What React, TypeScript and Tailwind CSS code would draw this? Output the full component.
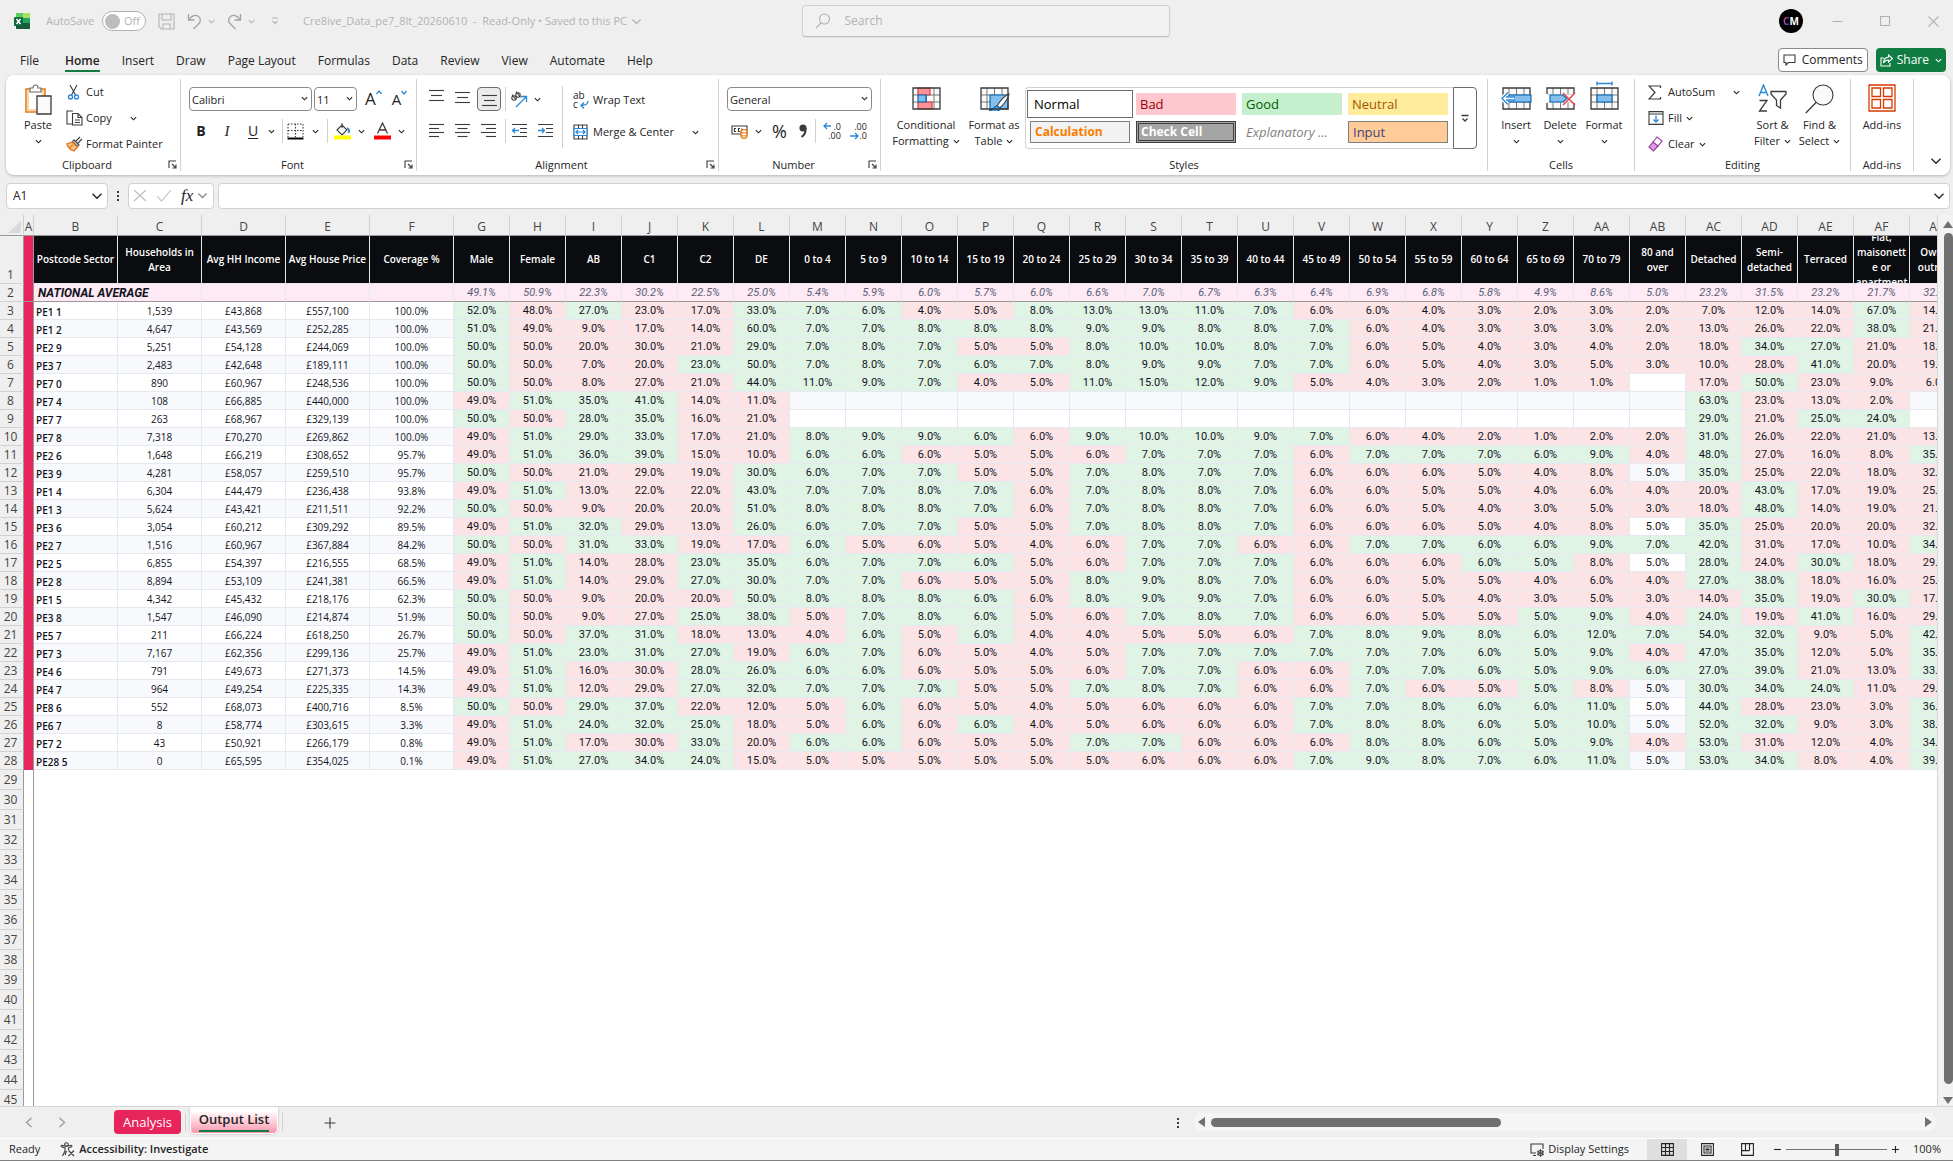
import React, { useState } from 'react';
import { clsx } from 'clsx';

const GROUP_SEPARATOR = 'border-r border-[#d1d1d1]';

const TABS = ['File', 'Home', 'Insert', 'Draw', 'Page Layout', 'Formulas', 'Data', 'Review', 'View', 'Automate', 'Help'];

const COLUMNS = [
  { letter: 'B', title: 'Postcode Sector' },
  { letter: 'C', title: 'Households in\nArea' },
  { letter: 'D', title: 'Avg HH Income' },
  { letter: 'E', title: 'Avg House Price' },
  { letter: 'F', title: 'Coverage %' },
];

// avg is printed in row 2, limit is the unrounded value used for the red/green rule
const METRICS = [
  { letter: 'G', title: 'Male', avg: '49.1%', limit: 49.1 },
  { letter: 'H', title: 'Female', avg: '50.9%', limit: 50.9 },
  { letter: 'I', title: 'AB', avg: '22.3%', limit: 22.3 },
  { letter: 'J', title: 'C1', avg: '30.2%', limit: 30.2 },
  { letter: 'K', title: 'C2', avg: '22.5%', limit: 22.5 },
  { letter: 'L', title: 'DE', avg: '25.0%', limit: 25 },
  { letter: 'M', title: '0 to 4', avg: '5.4%', limit: 5.4 },
  { letter: 'N', title: '5 to 9', avg: '5.9%', limit: 5.9 },
  { letter: 'O', title: '10 to 14', avg: '6.0%', limit: 6.01 },
  { letter: 'P', title: '15 to 19', avg: '5.7%', limit: 5.7 },
  { letter: 'Q', title: '20 to 24', avg: '6.0%', limit: 6.01 },
  { letter: 'R', title: '25 to 29', avg: '6.6%', limit: 6.6 },
  { letter: 'S', title: '30 to 34', avg: '7.0%', limit: 6.99 },
  { letter: 'T', title: '35 to 39', avg: '6.7%', limit: 6.7 },
  { letter: 'U', title: '40 to 44', avg: '6.3%', limit: 6.3 },
  { letter: 'V', title: '45 to 49', avg: '6.4%', limit: 6.4 },
  { letter: 'W', title: '50 to 54', avg: '6.9%', limit: 6.9 },
  { letter: 'X', title: '55 to 59', avg: '6.8%', limit: 6.8 },
  { letter: 'Y', title: '60 to 64', avg: '5.8%', limit: 5.8 },
  { letter: 'Z', title: '65 to 69', avg: '4.9%', limit: 4.9 },
  { letter: 'AA', title: '70 to 79', avg: '8.6%', limit: 8.6 },
  { letter: 'AB', title: '80 and\nover', avg: '5.0%', limit: 5 },
  { letter: 'AC', title: 'Detached', avg: '23.2%', limit: 23.2 },
  { letter: 'AD', title: 'Semi-\ndetached', avg: '31.5%', limit: 31.5 },
  { letter: 'AE', title: 'Terraced', avg: '23.2%', limit: 23.2 },
  { letter: 'AF', title: 'Flat,\nmaisonett\ne or\napartment', avg: '21.7%', limit: 21.7 },
  { letter: 'AG', title: 'Owned\noutright', avg: '32.5%', limit: 32.5 },
];

// sector | households | income | house price | coverage | percentages G..AG ("_" is an empty cell)
const ROWS = [
  'PE1 1|1,539|£43,868|£557,100|100.0%|52 48 27 23 17 33 7 6 4 5 8 13 13 11 7 6 6 4 3 2 3 2 7 12 14 67 14',
  'PE1 2|4,647|£43,569|£252,285|100.0%|51 49 9 17 14 60 7 7 8 8 8 9 9 8 8 7 6 4 3 3 3 2 13 26 22 38 21',
  'PE2 9|5,251|£54,128|£244,069|100.0%|50 50 20 30 21 29 7 8 7 5 5 8 10 10 8 7 6 5 4 3 4 2 18 34 27 21 18',
  'PE3 7|2,483|£42,648|£189,111|100.0%|50 50 7 20 23 50 7 8 7 6 7 8 9 9 7 7 6 5 4 3 5 3 10 28 41 20 19',
  'PE7 0|890|£60,967|£248,536|100.0%|50 50 8 27 21 44 11 9 7 4 5 11 15 12 9 5 4 3 2 1 1 _ 17 50 23 9 6',
  'PE7 4|108|£66,885|£440,000|100.0%|49 51 35 41 14 11 _ _ _ _ _ _ _ _ _ _ _ _ _ _ _ _ 63 23 13 2 _',
  'PE7 7|263|£68,967|£329,139|100.0%|50 50 28 35 16 21 _ _ _ _ _ _ _ _ _ _ _ _ _ _ _ _ 29 21 25 24 _',
  'PE7 8|7,318|£70,270|£269,862|100.0%|49 51 29 33 17 21 8 9 9 6 6 9 10 10 9 7 6 4 2 1 2 2 31 26 22 21 13',
  'PE2 6|1,648|£66,219|£308,652|95.7%|49 51 36 39 15 10 6 6 6 5 5 6 7 7 7 6 7 7 7 6 9 4 48 27 16 8 35',
  'PE3 9|4,281|£58,057|£259,510|95.7%|50 50 21 29 19 30 6 7 7 5 5 7 8 7 7 6 6 6 5 4 8 5 35 25 22 18 32',
  'PE1 4|6,304|£44,479|£236,438|93.8%|49 51 13 22 22 43 7 7 8 7 6 7 8 8 7 6 6 5 5 4 6 4 20 43 17 19 25',
  'PE1 3|5,624|£43,421|£211,511|92.2%|50 50 9 20 20 51 8 8 8 7 6 7 8 8 7 6 6 5 4 3 5 3 18 48 14 19 21',
  'PE3 6|3,054|£60,212|£309,292|89.5%|49 51 32 29 13 26 6 7 7 5 5 7 8 8 7 6 6 6 5 4 8 5 35 25 20 20 32',
  'PE2 7|1,516|£60,967|£367,884|84.2%|50 50 31 33 19 17 6 5 6 5 4 6 7 7 6 6 7 7 6 6 9 7 42 31 17 10 34',
  'PE2 5|6,855|£54,397|£216,555|68.5%|49 51 14 28 23 35 6 7 7 6 5 6 7 7 7 6 6 6 6 5 8 5 28 24 30 18 29',
  'PE2 8|8,894|£53,109|£241,381|66.5%|49 51 14 29 27 30 7 7 6 5 5 8 9 8 7 6 6 5 5 4 6 4 27 38 18 16 25',
  'PE1 5|4,342|£45,432|£218,176|62.3%|50 50 9 20 20 50 8 8 8 6 6 8 9 9 7 6 6 5 4 3 5 3 14 35 19 30 17',
  'PE3 8|1,547|£46,090|£214,874|51.9%|50 50 9 27 25 38 5 7 8 6 5 6 7 8 7 6 6 5 5 5 9 4 24 19 41 16 29',
  'PE5 7|211|£66,224|£618,250|26.7%|50 50 37 31 18 13 4 6 5 6 4 4 5 5 6 7 8 9 8 6 12 7 54 32 9 5 42',
  'PE7 3|7,167|£62,356|£299,136|25.7%|49 51 23 31 27 19 6 7 6 5 4 5 7 7 7 7 7 7 6 5 9 4 47 35 12 5 35',
  'PE4 6|791|£49,673|£271,373|14.5%|49 51 16 30 28 26 6 6 6 5 5 6 7 7 6 6 7 7 6 5 9 6 27 39 21 13 33',
  'PE4 7|964|£49,254|£225,335|14.3%|49 51 12 29 27 32 7 7 7 5 5 7 8 7 6 6 7 6 5 5 8 5 30 34 24 11 29',
  'PE8 6|552|£68,073|£400,716|8.5%|50 50 29 37 22 12 5 6 6 5 4 5 6 6 6 7 7 8 6 6 11 5 44 28 23 3 36',
  'PE6 7|8|£58,774|£303,615|3.3%|49 51 24 32 25 18 5 6 6 6 4 5 6 6 6 7 8 8 6 5 10 5 52 32 9 3 38',
  'PE7 2|43|£50,921|£266,179|0.8%|49 51 17 30 33 20 6 6 6 5 5 7 7 6 6 6 8 8 6 5 9 4 53 31 12 4 34',
  'PE28 5|0|£65,595|£354,025|0.1%|49 51 27 34 24 15 5 5 5 5 5 5 6 6 6 7 9 8 7 6 11 5 53 34 8 4 39',
];

const EMPTY_ROWS = Array.from({ length: 17 }, (_, i) => i + 29);

function Chevron({ size = 7, className = '' }: { size?: number; className?: string }) {
  return (
    <svg width={size} height={size} viewBox="0 0 8 8" fill="none" stroke="currentColor" strokeWidth={size > 8 ? 0.9 : 1.3} className={clsx('shrink-0', className)}>
      <path d="M1 2.5 4 5.5 7 2.5" />
    </svg>
  );
}

function Svg({ w, h, children, className = '' }: { w: number; h: number; children: React.ReactNode; className?: string }) {
  return (
    <svg width={w} height={h} viewBox={`0 0 ${w} ${h}`} fill="none" stroke="#3b3b3b" strokeWidth="1.1" className={clsx('shrink-0', className)}>
      {children}
    </svg>
  );
}

function TitleBar() {
  const [autoSave, setAutoSave] = useState(false);

  return (
    <header className="grid h-[42px] grid-cols-[1fr_368px_1fr] items-center pl-[18px] text-[11px] text-[#b3b3b3]">
      <div className="-ml-1 flex items-center">
        <Svg w={16} h={18}>
          <rect x="2" y="1" width="14" height="16" rx="1.5" fill="#21a366" stroke="none" />
          <rect x="2" y="1" width="7" height="5" fill="#57d163" stroke="none" />
          <rect x="9" y="1" width="7" height="5" fill="#a8e063" stroke="none" />
          <rect x="2" y="11" width="14" height="6" rx="1" fill="#185c37" stroke="none" />
          <rect x="0" y="5" width="9" height="9" rx="1" fill="#0f6b3a" stroke="none" />
          <path d="m2.500 7 4 5M6.500 7l-4 5" stroke="#fff" strokeWidth="1.500" />
        </Svg>
        <label className="ml-4 flex items-center gap-2">
          AutoSave
          <input type="checkbox" role="switch" className="sr-only" checked={autoSave} onChange={(e) => setAutoSave(e.target.checked)} />
          <span className="flex h-5 w-11 items-center gap-1 rounded-full border border-[#b3b3b3] bg-white px-0.5">
            <span className="h-[15px] w-[15px] rounded-full bg-[#bdbdbd]" />
            {autoSave ? 'On' : 'Off'}
          </span>
        </label>
        <button aria-label="Save" className="ml-3">
          <Svg w={17} h={17}>
            <path d="M1 1h15v15H3.500L1 13.500zM4 1v6h9V1M5 16v-5h7v5" stroke="#b3b3b3" />
          </Svg>
        </button>
        <button aria-label="Undo" className="ml-3 flex items-center gap-1.5">
          <Svg w={15} h={17}>
            <path d="M1.500 1v6h6M1.500 7C5 2 9 1.500 11.500 3.500 14.500 6 13.500 9 11.500 11L6.500 16" stroke="#a3a3a3" strokeWidth="1.300" />
          </Svg>
          <Chevron />
        </button>
        <button aria-label="Redo" className="ml-3 flex items-center gap-1.5">
          <Svg w={15} h={17}>
            <path d="M13.500 1v6h-6M13.500 7C10 2 6 1.500 3.500 3.500.5 6 1.500 9 3.500 11l5 5" stroke="#a3a3a3" strokeWidth="1.300" />
          </Svg>
          <Chevron />
        </button>
        <button aria-label="Customize Quick Access Toolbar" className="ml-4">
          <Svg w={8} h={10}>
            <path d="M1 2h6M1.500 5 4 7.500 6.500 5" stroke="#b3b3b3" />
          </Svg>
        </button>
        <button className="ml-6 flex items-center gap-1 whitespace-nowrap">
          <span className="whitespace-pre">Cre8ive_Data_pe7_8lt_20260610  -  Read-Only • Saved to this PC</span>
          <Chevron size={11} />
        </button>
      </div>

      <label className="flex h-8 items-center gap-3.5 rounded-[4px] border border-[#d0d0d0] border-b-[#bdbdbd] bg-[#f1f1f1] px-3 shadow-xs">
        <Svg w={16} h={16}>
          <circle cx="9.500" cy="6" r="5" stroke="#b3b3b3" />
          <path d="m6 10-5 5" stroke="#b3b3b3" />
        </Svg>
        <input type="text" aria-label="Search" placeholder="Search" className="w-full bg-transparent text-[12px] outline-none placeholder:text-[#b3b3b3]" />
      </label>

      <div className="flex items-center justify-end gap-[37px] pr-3.5">
        <span className="-mr-2 flex h-6 w-6 items-center justify-center rounded-full bg-black text-[10px] font-bold text-white">
          <span className="bg-linear-to-b from-[#e8245c] to-[#5a2ff0] bg-clip-text text-transparent">C</span>M
        </span>
        <button aria-label="Minimize">
          <Svg w={11} h={11}><path d="M.5 5.500h10" stroke="#b3b3b3" /></Svg>
        </button>
        <button aria-label="Maximize">
          <Svg w={11} h={11}><rect x=".5" y=".5" width="9" height="9" stroke="#b3b3b3" /></Svg>
        </button>
        <button aria-label="Close">
          <Svg w={11} h={11}><path d="m.5.5 10 10M10.500.5l-10 10" stroke="#b3b3b3" /></Svg>
        </button>
      </div>
    </header>
  );
}

function TabBar() {
  return (
    <div className="flex h-[33px] items-end justify-between pr-[7px] pb-[3px] text-[12px]">
      <nav className="flex items-end gap-[22px] pl-5">
        {TABS.map((tab) => (
          <button
            key={tab}
            className={clsx('h-6 border-b-2 pt-1', tab === 'Home' ? 'ml-1 border-[#107c41] font-semibold' : 'border-transparent')}
          >
            {tab}
          </button>
        ))}
      </nav>
      <div className="flex gap-2">
        <button className="flex h-6 items-center gap-1.5 rounded-[4px] border border-[#8a8a8a] bg-white px-1">
          <Svg w={13} h={12}><path d="M1 1h11v7.500H5.500L3 11V8.500H1z" /></Svg>
          Comments
        </button>
        <button className="flex h-6 items-center gap-1 rounded-[4px] bg-[#107c41] px-1 text-white">
          <Svg w={13} h={13}>
            <path d="M4 4H1v8h9V9M8.500 1l4 3.500-4 3.500V6C6 6 4.500 7 3.500 9c0-3 2-5.500 5-6z" stroke="#fff" />
          </Svg>
          Share
          <Chevron className="ml-0.5" />
        </button>
      </div>
    </div>
  );
}

function Group({ label, launcher, className, children }: { label: string; launcher?: boolean; className: string; children: React.ReactNode }) {
  return (
    <section aria-label={label} className={clsx('my-1 flex flex-col', GROUP_SEPARATOR, className)}>
      <div className="flex h-[79px]">{children}</div>
      <div className="flex h-[13px] items-center">
        <span className="flex-1 text-center leading-none">{label}</span>
        {launcher && (
          <button aria-label={`${label} settings`} className="pr-[3px]">
            <Svg w={9} h={9}><path d="M1 8V1h7M4 4l4 4M8 4.500V8H4.500" /></Svg>
          </button>
        )}
      </div>
    </section>
  );
}

function BigButton({ icon, lines, chevron, className }: { icon: React.ReactNode; lines: string[]; chevron?: boolean; className: string }) {
  return (
    <button className={clsx('flex shrink-0 flex-col items-center justify-start leading-4', className)}>
      <span className="flex h-[38px] items-start">{icon}</span>
      <span>{lines[0]}</span>
      <span className="flex h-4 items-center gap-1">
        {lines[1]}
        {chevron && <Chevron />}
      </span>
    </button>
  );
}

function SmallButton({ icon, label, chevron, wide }: { icon: React.ReactNode; label: string; chevron?: boolean; wide?: boolean }) {
  return (
    <button className="flex h-[26px] items-center whitespace-nowrap">
      <span className="flex w-5 justify-start">{icon}</span>
      {label}
      {chevron && <Chevron className={wide ? 'ml-[18px]' : 'ml-1'} />}
    </button>
  );
}

function Combo({ label, value, className }: { label: string; value: string; className: string }) {
  return (
    <div className={clsx('relative', className)}>
      <select aria-label={label} defaultValue={value} className="h-6 w-full appearance-none rounded-[4px] border border-[#8a8a8a] bg-white pl-0.5 leading-none">
        <option>{value}</option>
      </select>
      <Chevron className="pointer-events-none absolute top-2 right-1" />
    </div>
  );
}

function Lines({ rows, align = 'center' }: { rows: number[]; align?: 'left' | 'center' | 'right' }) {
  return (
    <Svg w={15} h={16}>
      {rows.map((len, i) => {
        const x = align === 'left' ? 0 : align === 'right' ? 15 - len : (15 - len) / 2;
        const y = 1.5 + i * (rows.length > 3 ? 4 : 5);
        return <path key={i} d={`M${x} ${y}h${len}`} />;
      })}
    </Svg>
  );
}

function GridIcon({ kind }: { kind: 'conditional' | 'table' | 'insert' | 'delete' | 'format' }) {
  return (
    <Svg w={31} h={32}>
      {kind === 'format' && <path d="M8 4.500h15M8 2.500v4M23 2.500v4" stroke="#2b88d8" strokeWidth="1.400" />}
      <g transform="translate(1 8)">
        <path d="M1 1h27v21H1z" fill="#fafafa" stroke="none" />
        <path d="M1 8h27M1 15h27M7 1v21M14.500 1v21M22 1v21" strokeWidth=".9" stroke="#6b6b6b" />
        {kind === 'conditional' && (
          <>
            <path d="M6 1h12v7H6zM6 15h14v7H6z" fill="#ff9296" stroke="#d13438" />
            <path d="M6 8h8v7H6z" fill="#83beec" stroke="#0063b1" />
          </>
        )}
        {kind === 'table' && (
          <>
            <path d="M10 8h18v14H10z" fill="#83beec" stroke="#0063b1" />
            <path d="M29 7c-5 2-9 7-12 12l3 2c4-4 8-9 9-14z" fill="#fff" />
            <path d="M17 19c-4 0-3 5-8 4 4 3 11 2 11-2z" fill="#5ba4e0" stroke="#0063b1" />
          </>
        )}
        {kind !== 'delete' && <path d="M1 1h27v21H1z" strokeWidth="1.300" />}
        {kind === 'insert' && (
          <>
            <path d="M6 8h23v7H6z" fill="#83beec" stroke="#0063b1" />
            <path d="M12 11.500H0M5.500 6 0 11.500 5.500 17" stroke="#fff" strokeWidth="4" />
            <path d="M13 10H4M13 13H4M6 5.500l-6 6 6 6" stroke="#2b88d8" strokeWidth="1.300" />
          </>
        )}
        {kind === 'delete' && (
          <>
            <path d="M1 7V1h27v6M1 16v6h27v-6" strokeWidth="1.300" />
            <path d="M0 7.500h29v8H0z" fill="#fff" stroke="none" />
            <path d="M4 8h13l4 3.500-4 3.500H4z" fill="#83beec" stroke="#0063b1" />
            <path d="m17 6 12 12M29 6 17 18" stroke="#e8474c" strokeWidth="1.500" />
          </>
        )}
        {kind === 'format' && <path d="M7 8h15v7H7z" fill="#83beec" stroke="#0063b1" />}
      </g>
    </Svg>
  );
}

function Divider({ className = 'h-6' }: { className?: string }) {
  return <span className={clsx('w-px shrink-0 bg-[#d1d1d1]', className)} />;
}

function StyleGallery() {
  return (
    <div className="mt-2 flex h-[62px]">
      <div className="grid w-[428px] grid-cols-[repeat(4,100px)] grid-rows-[22px_22px] gap-x-1.5 gap-y-1.5 rounded-l-[4px] border border-r-0 border-[#d1d1d1] py-[5px] pl-1 text-left text-[13px] leading-5">
        <button className="bg-white pl-1 text-left text-black outline outline-offset-2 outline-[#6b6b6b]">Normal</button>
        <button className="bg-[#ffc7ce] pl-1 text-left text-[#9c0006]">Bad</button>
        <button className="bg-[#c6efce] pl-1 text-left text-[#006100]">Good</button>
        <button className="bg-[#ffeb9c] pl-1 text-left text-[#9c5700]">Neutral</button>
        <button className="border border-[#7f7f7f] bg-[#f2f2f2] pl-1 text-left text-[12px] leading-none font-bold text-[#fa7d00]">Calculation</button>
        <button className="border-3 border-double border-[#3f3f3f] bg-[#a5a5a5] pl-0.5 text-left text-[12px] leading-none font-bold text-white">Check Cell</button>
        <button className="pl-1 text-left text-[#7f7f7f] italic">Explanatory ...</button>
        <button className="border border-[#7f7f7f] bg-[#ffcc99] pl-1 text-left leading-none text-[#3f3f76]">Input</button>
      </div>
      <button aria-label="More styles" className="flex w-6 items-center justify-center rounded-r-[4px] border border-[#6b6b6b]">
        <Svg w={8} h={9}><path d="M.5 1.500h7M1.500 4.500 4 7l2.500-2.500" strokeWidth="1.300" /></Svg>
      </button>
    </div>
  );
}

function Ribbon() {
  return (
    <div className="mr-[3px] ml-1.5 flex h-[100px] rounded-lg bg-white text-[11px] text-[#242424] shadow-[0_1px_3px_rgba(0,0,0,0.25)]">
      <Group label="Clipboard" launcher className="w-[175px]">
        <BigButton
          className="ml-1 w-14"
          lines={['Paste', '']}
          chevron
          icon={
            <Svg w={28} h={31} className="mt-[5px]">
              <path d="M2 5h19v23H2z" fill="#fff" stroke="#e07a10" strokeWidth="1.500" />
              <path d="M4 7h15v19H4z" fill="#fff" stroke="#f8d9a8" strokeWidth="2" />
              <path d="M6 8V4h3c0-4 5-4 5 0h3v4z" fill="#fff" stroke="#6b6b6b" />
              <path d="M13 12h14v18H13z" fill="#fafafa" strokeWidth="1.300" />
            </Svg>
          }
        />
        <div className="flex flex-col">
          <SmallButton
            label="Cut"
            icon={
              <Svg w={15} h={16}>
                <path d="M4 1l5.500 10M11 1 5.500 11" />
                <circle cx="4.500" cy="13" r="2" stroke="#2b88d8" strokeWidth="1.400" />
                <circle cx="10.500" cy="13" r="2" stroke="#2b88d8" strokeWidth="1.400" />
              </Svg>
            }
          />
          <SmallButton
            label="Copy"
            chevron
            wide
            icon={
              <Svg w={17} h={16}>
                <path d="M6 14H1V1h6M6.500 3.500h5.500l4 4V15H6.500zM12 3.500v4h4M9 10h5M9 12.500h5" />
              </Svg>
            }
          />
          <SmallButton
            label="Format Painter"
            icon={
              <Svg w={17} h={16}>
                <path d="m14 1-4 4M16 3l-4 4M8 4l5 5-1.500 1.500-5-5z" />
                <path d="M6 6 1 8c1 4 4 6 7 7l3.500-4z" fill="#f6c08a" stroke="#e07a10" strokeWidth="1.300" />
                <path d="m4 11 3-2" stroke="#e07a10" />
              </Svg>
            }
          />
        </div>
      </Group>

      <Group label="Font" launcher className="w-[236px]">
        <div className="flex flex-col gap-2 pt-2 pl-2">
          <div className="flex items-center gap-0.5">
            <Combo label="Font" value="Calibri" className="w-[123px]" />
            <Combo label="Font Size" value="11" className="w-[43px]" />
            <button className="ml-1.5 flex text-[17px] leading-6" aria-label="Increase Font Size">
              A<Svg w={6} h={12}><path d="M.5 7 3 4l2.500 3" stroke="#2b88d8" strokeWidth="1.300" /></Svg>
            </button>
            <button className="ml-2 flex text-[15px] leading-6" aria-label="Decrease Font Size">
              A<Svg w={6} h={12}><path d="M.5 4 3 7l2.500-3" stroke="#2b88d8" strokeWidth="1.300" /></Svg>
            </button>
          </div>
          <div className="flex h-6 items-center text-[14px] leading-none">
            <button className="w-6 font-bold">B</button>
            <button className="w-7 font-['Liberation_Serif'] text-[15px] italic">I</button>
            <button className="w-6 underline underline-offset-2">U</button>
            <Chevron className="mx-[3px]" />
            <Divider className="mx-1 h-6" />
            <Svg w={17} h={17}>
              <path d="M1 1h15M1 1v13M16 1v13M8.500 1v13M1 7.500h15" strokeDasharray="1.500 1.500" />
              <path d="M.5 15.500h16" stroke="#000" strokeWidth="2" />
            </Svg>
            <Chevron className="mx-2" />
            <Divider />
            <Svg w={17} h={18} className="ml-1.5">
              <path d="M8 1v5M3 8l5-5 5 5-5 5z" fill="#fff" />
              <path d="M13 6c2 1 2.500 3 1.500 5" stroke="#2b88d8" strokeWidth="1.800" />
              <path d="M0 13.500h17v4H0z" fill="#ffff00" stroke="none" />
            </Svg>
            <Chevron className="mx-[7px]" />
            <Svg w={17} h={18} className="ml-0.5">
              <path d="M3.500 11.500 8.500 1l5 10.500M5.500 8h6" strokeWidth="1.300" />
              <path d="M0 13.500h17v4H0z" fill="#ff0000" stroke="none" />
            </Svg>
            <Chevron className="ml-[7px]" />
          </div>
        </div>
      </Group>

      <Group label="Alignment" launcher className="w-[302px]">
        <div className="flex w-[145px] flex-col gap-2 pt-2 pl-2">
          <div className="flex h-6 items-center">
            <button aria-label="Top Align" className="w-[26px] pb-1 pl-1"><Lines rows={[15, 11, 15]} /></button>
            <button aria-label="Middle Align" className="w-[26px] pl-1"><Lines rows={[15, 11, 15]} /></button>
            <button aria-label="Bottom Align" className="flex h-6 w-6 items-end justify-center rounded-[4px] border border-[#6b6b6b] bg-[#ebebeb]">
              <Lines rows={[15, 11, 15]} />
            </button>
            <Divider className="mx-1 h-6" />
            <button aria-label="Orientation" className="flex items-center gap-1.5">
              <Svg w={18} h={17}>
                <circle cx="4" cy="7" r="2.200" />
                <circle cx="8" cy="4" r="2.200" />
                <path d="M2 3.500 6 9M6 .5l4.500 6" />
                <path d="m6 16 10-10M11 5.500h5.500V11" stroke="#2b88d8" strokeWidth="1.300" />
              </Svg>
              <Chevron />
            </button>
          </div>
          <div className="flex h-6 items-center">
            <button aria-label="Align Left" className="w-[26px] pl-1"><Lines rows={[15, 10, 15, 10]} align="left" /></button>
            <button aria-label="Center" className="w-[26px] pl-1"><Lines rows={[15, 10, 15, 10]} /></button>
            <button aria-label="Align Right" className="w-6 pl-1"><Lines rows={[15, 10, 15, 10]} align="right" /></button>
            <Divider className="mx-1 h-6" />
            <button aria-label="Decrease Indent" className="w-[26px] pl-0.5">
              <Svg w={15} h={16}>
                <path d="M0 1.500h15M8 5.500h7M8 9.500h7M0 13.500h15" />
                <path d="M7 7.500H.5M3 5 .5 7.500 3 10" stroke="#2b88d8" strokeWidth="1.300" />
              </Svg>
            </button>
            <button aria-label="Increase Indent" className="pl-0.5">
              <Svg w={15} h={16}>
                <path d="M0 1.500h15M8 5.500h7M8 9.500h7M0 13.500h15" />
                <path d="M0 7.500h6.500M4 5l2.500 2.500L4 10" stroke="#2b88d8" strokeWidth="1.300" />
              </Svg>
            </button>
          </div>
        </div>
        <Divider className="mt-[7px] h-[62px]" />
        <div className="flex flex-col gap-1.5 pt-2 pl-2.5">
          <SmallButton
            label="Wrap Text"
            icon={
              <span className="relative w-4 text-left text-[10px] leading-[9px]">
                ab
                <br />c
                <Svg w={9} h={9} className="absolute right-0 bottom-0">
                  <path d="M8 1c0 4-3 4.500-7 4.500M4 2.500l-3 3 3 3" stroke="#2b88d8" strokeWidth="1.300" />
                </Svg>
              </span>
            }
          />
          <SmallButton
            label="Merge & Center"
            chevron
            wide
            icon={
              <Svg w={15} h={16}>
                <path d="M1 1h13v14H1zM5.500 1v4M9.500 1v4M5.500 11v4M9.500 11v4" />
                <path d="M1 4.500h13v7H1zM3 8h9M5 6 3 8l2 2M10 6l2 2-2 2" fill="#fff" stroke="#2b88d8" strokeWidth="1.200" />
              </Svg>
            }
          />
        </div>
      </Group>

      <Group label="Number" launcher className="w-[162px]">
        <div className="flex w-full flex-col gap-2 px-2 pt-2">
          <Combo label="Number Format" value="General" className="w-full" />
          <div className="flex h-6 items-center">
            <button aria-label="Accounting Number Format" className="ml-1 flex items-center gap-1.5">
              <Svg w={18} h={16}>
                <path d="M1 3h15v8H1zM5 5.500H3.500v3H5M9 5.500H7.500v3H9M11 5.500v3" />
                <path d="M10 8.500c0-2.500 6-2.500 6 0v5c0 2.500-6 2.500-6 0z" fill="#fff" stroke="#e07a10" strokeWidth="1.200" />
                <path d="M10 8.500c0 2 6 2 6 0M10 11.500c0 2 6 2 6 0" stroke="#e07a10" />
              </Svg>
              <Chevron />
            </button>
            <button aria-label="Percent Style" className="ml-2.5 text-[18px] leading-none">%</button>
            <button aria-label="Comma Style" className="ml-3">
              <Svg w={9} h={14}>
                <circle cx="4" cy="4" r="3" fill="#3b3b3b" />
                <path d="M6.500 4c.5 4-1 7-4 9" strokeWidth="2" />
              </Svg>
            </button>
            <Divider className="mx-[7px] h-6" />
            <button aria-label="Increase Decimal" className="relative w-[18px] text-right text-[9px] leading-[9px]">
              <Svg w={9} h={8} className="absolute top-0 left-0"><path d="M8 4H1M4 1 1 4l3 3" stroke="#2b88d8" strokeWidth="1.300" /></Svg>
              .0<br />.00
            </button>
            <button aria-label="Decrease Decimal" className="relative ml-2 w-[18px] text-right text-[9px] leading-[9px]">
              .00<br />.0
              <Svg w={10} h={8} className="absolute bottom-0 left-0"><path d="M1 4h8M6 1l3 3-3 3" stroke="#2b88d8" strokeWidth="1.300" /></Svg>
            </button>
          </div>
        </div>
      </Group>

      <Group label="Styles" className="min-w-0 flex-1">
        <BigButton className="ml-2 w-[74px]" lines={['Conditional', 'Formatting']} chevron icon={<GridIcon kind="conditional" />} />
        <BigButton className="w-[62px]" lines={['Format as', 'Table']} chevron icon={<GridIcon kind="table" />} />
        <StyleGallery />
      </Group>

      <Group label="Cells" className="w-[147px]">
        <BigButton className="ml-1.5 w-11" lines={['Insert', '']} chevron icon={<GridIcon kind="insert" />} />
        <BigButton className="w-11" lines={['Delete', '']} chevron icon={<GridIcon kind="delete" />} />
        <BigButton className="w-11" lines={['Format', '']} chevron icon={<GridIcon kind="format" />} />
      </Group>

      <Group label="Editing" className="w-[216px]">
        <div className="flex w-[114px] flex-col pl-[13px]">
          <SmallButton label="AutoSum" chevron wide icon={<Svg w={14} h={15}><path d="M12.500 3V1H1l6 6.500L1 14h11.500v-2" strokeWidth="1.200" /></Svg>} />
          <SmallButton
            label="Fill"
            chevron
            icon={
              <Svg w={16} h={14}>
                <path d="M1 .6h14v12.800H1zM1 3h14" />
                <path d="M8 4.500V11M5.500 8.500 8 11l2.500-2.500" stroke="#2b88d8" strokeWidth="1.300" />
              </Svg>
            }
          />
          <SmallButton
            label="Clear"
            chevron
            icon={
              <Svg w={15} h={16}>
                <path d="M5 6 1 11l4.500 4L10 10z" fill="#d9a0e0" stroke="#9b3fa8" strokeWidth="1.200" />
                <path d="m5 6 4-5 5 4-4 5z" fill="#fff" stroke="#9b3fa8" strokeWidth="1.200" />
              </Svg>
            }
          />
        </div>
        <BigButton
          className="w-[47px]"
          lines={['Sort &', 'Filter']}
          chevron
          icon={
            <Svg w={29} h={29} className="mt-[5px]">
              <path d="M1 12 5.500 1 10 12M2.500 8.500h6" stroke="#2b88d8" strokeWidth="1.400" />
              <path d="M1.500 16.500H9L1.500 27H9" strokeWidth="1.300" />
              <path d="M13 7.500h15v2.500l-5.500 6V24l-4-2.500V16L13 10z" strokeWidth="1.300" />
            </Svg>
          }
        />
        <BigButton
          className="w-[47px]"
          lines={['Find &', 'Select']}
          chevron
          icon={
            <Svg w={30} h={30} className="mt-[5px]">
              <circle cx="18" cy="11" r="10" fill="#fafafa" />
              <path d="M11 18.500.8 29" strokeWidth="1.300" />
            </Svg>
          }
        />
      </Group>

      <Group label="Add-ins" className="w-[63px]">
        <BigButton
          className="w-full"
          lines={['Add-ins', '']}
          icon={
            <Svg w={28} h={28} className="mt-[5px]">
              <path d="M1 1h26v26H1zM4 4h8.500v8.500H4zM15.500 4H24v8.500h-8.500zM4 15.500h8.500V24H4zM15.500 15.500H24V24h-8.500z" stroke="#d83b01" strokeWidth="1.300" />
            </Svg>
          }
        />
      </Group>
      <button aria-label="Collapse ribbon" className="flex w-9 items-end justify-end pr-2 pb-2">
        <Chevron size={12} />
      </button>
    </div>
  );
}

function FormulaBar() {
  const box = 'flex h-[26px] items-center rounded-[4px] border border-[#d1d1d1] bg-white';

  return (
    <div className="flex h-10 items-center gap-1 pt-px pr-[3px] pl-1.5 text-[12px]">
      <label className={clsx(box, 'w-[102px] pr-1')}>
        <input type="text" aria-label="Name Box" defaultValue="A1" className="w-full min-w-0 bg-transparent pl-1.5 outline-none" />
        <Chevron size={12} />
      </label>
      <Svg w={12} h={12}>
        <path d="M5 1h2v2H5zM5 5h2v2H5zM5 9h2v2H5z" fill="#3b3b3b" stroke="none" />
      </Svg>
      <div className={clsx(box, 'w-[86px] gap-[9px] pl-1')}>
        <button aria-label="Cancel"><Svg w={14} h={13}><path d="m1 1 12 11M13 1 1 12" stroke="#bdbdbd" /></Svg></button>
        <button aria-label="Enter"><Svg w={16} h={13}><path d="m1 7 4.500 5L15 1" stroke="#bdbdbd" /></Svg></button>
        <button aria-label="Insert Function" className="flex items-center gap-1 font-['Liberation_Serif'] text-[17px] leading-none italic">
          fx
          <Chevron size={11} className="text-[#8a8a8a]" />
        </button>
      </div>
      <label className={clsx(box, 'min-w-0 flex-1 pr-1')}>
        <input type="text" aria-label="Formula Bar" className="w-full bg-transparent px-1.5 outline-none" />
        <Chevron size={12} />
      </label>
    </div>
  );
}

function Sheet() {
  const letterCell = 'border-r border-b border-r-[#d1d1d1] border-b-[#999] bg-[#efefef] p-0 pt-[3px] text-[12px] font-normal text-[#444]';
  const rowHead = 'border-r border-b border-r-[#999] border-b-[#d1d1d1] bg-[#efefef] p-0 pt-px pr-0.5 text-center text-[12px] font-normal text-[#444]';
  const titleCell = 'border-r border-b border-[#e6e8f0] bg-[#0b0c10] p-0 text-[10px] leading-[15px] font-semibold text-white';
  const metricCell = "border-r border-b border-[#e6e8f0] p-0 text-center font-['Roboto'] text-[11px] text-[#11131c]";

  return (
    <div className="min-w-0 flex-1 overflow-hidden bg-white">
      <table className="w-max table-fixed border-separate border-spacing-0 leading-none">
        <colgroup>
          <col className="w-6" />
          <col className="w-2.5" />
          {COLUMNS.map((c) => <col key={c.letter} className="w-[84px]" />)}
          {METRICS.map((m) => <col key={m.letter} className="w-14" />)}
        </colgroup>
        <thead>
          <tr className="h-[21px]">
            <th className={clsx(letterCell, 'w-6 min-w-6')}>
              <Svg w={13} h={12} className="ml-2"><path d="M13 0v12H0z" fill="#d9d9d9" stroke="none" /></Svg>
            </th>
            <th className={clsx(letterCell, 'w-2.5 max-w-2.5 min-w-2.5')}>A</th>
            {COLUMNS.map((c) => <th key={c.letter} className={clsx(letterCell, 'w-[84px] min-w-[84px]')}>{c.letter}</th>)}
            {METRICS.map((m) => <th key={m.letter} className={clsx(letterCell, 'w-14 min-w-14')}>{m.letter}</th>)}
          </tr>
        </thead>
        <tbody>
          <tr className="h-12">
            <th className={clsx(rowHead, 'pb-0.5 align-bottom')}>1</th>
            <td className="border-r border-[#999] bg-[#e8245c] p-0" />
            {COLUMNS.concat(METRICS).map((c) => (
              <th key={c.letter} className={titleCell}>
                <div className="flex h-[47px] items-center justify-center overflow-hidden whitespace-pre">{c.title}</div>
              </th>
            ))}
          </tr>
          <tr className="h-[18px]">
            <th className={clsx(rowHead, 'border-b-[#999]')}>2</th>
            <td className="border-r border-b border-[#999] bg-[#e8245c] p-0" />
            <td colSpan={2} className="border-r border-b border-r-[#e6e8f0] border-b-[#999] bg-[#fdeaf4] p-0 pl-1 font-['Roboto'] text-[12px] font-bold text-[#11131c] italic">
              NATIONAL AVERAGE
            </td>
            {['D', 'E', 'F'].map((c) => <td key={c} className="border-r border-b border-r-[#e6e8f0] border-b-[#999] bg-[#fdeaf4] p-0" />)}
            {METRICS.map((m) => (
              <td key={m.letter} className="border-r border-b border-r-[#e6e8f0] border-b-[#999] bg-[#fdeaf4] p-0 text-center font-['Roboto'] text-[11px] text-[#5a5f78] italic">
                {m.avg}
              </td>
            ))}
          </tr>
          {ROWS.map((row, i) => {
            const [sector, households, income, price, coverage, values] = row.split('|');
            const band = i % 2 ? 'bg-[#f7f9fd]' : 'bg-white';
            return (
              <tr key={sector} className="h-[18px]">
                <th className={rowHead}>{i + 3}</th>
                <td className="border-r border-[#999] bg-[#e8245c] p-0" />
                <th className={clsx('border-r border-b border-[#e6e8f0] p-0 pt-0.5 pl-0.5 text-left text-[10px] font-semibold text-[#11131c]', band)}>{sector}</th>
                {[households, income, price, coverage].map((text, n) => (
                  <td key={n} className={clsx('border-r border-b border-[#e6e8f0] p-0 text-center text-[10px] text-[#11131c]', band)}>{text}</td>
                ))}
                {values.split(' ').map((value, n) => {
                  const diff = Number(value) - METRICS[n].limit;
                  const fill = value === '_' || diff === 0 ? band : diff > 0 ? 'bg-[#e0f4e5]' : 'bg-[#fce4e6]';
                  return <td key={n} className={clsx(metricCell, fill)}>{value === '_' ? '' : `${value}.0%`}</td>;
                })}
              </tr>
            );
          })}
          {EMPTY_ROWS.map((n) => (
            <tr key={n} className="h-5">
              <th className={rowHead}>{n}</th>
              <td className="border-r border-[#999] bg-white p-0" />
            </tr>
          ))}
        </tbody>
      </table>
    </div>
  );
}

function SheetTabs() {
  return (
    <div className="flex h-8 items-start border-t border-[#d6d6d6]">
      <div className="flex flex-1 items-start text-[13px]">
        <button aria-label="Previous sheet" className="mt-2.5 ml-[25px]">
          <Svg w={8} h={11}><path d="M6.500 1 1.500 5.500l5 4.500" stroke="#9a9a9a" strokeWidth="1.300" /></Svg>
        </button>
        <button aria-label="Next sheet" className="mt-2.5 ml-[25px]">
          <Svg w={8} h={11}><path d="m1.500 1 5 4.500-5 4.500" stroke="#9a9a9a" strokeWidth="1.300" /></Svg>
        </button>
        <button className="mt-[3px] ml-12 h-6 w-[67px] rounded-[4px] bg-[#e8245c] leading-6 text-white">Analysis</button>
        <Divider className="mt-1.5 ml-1 h-[18px]" />
        <button className="ml-1 h-[27px] w-[88px] rounded-b-[5px] border border-t-0 border-white bg-linear-to-b from-white from-15% to-[#f795b0] shadow-[0_0_2px_rgba(0,0,0,0.3)] [clip-path:inset(0_-3px_-3px_-3px)]">
          <span className="inline-block border-b-2 border-[#107c41] text-[13px] leading-[21px] font-semibold text-[#242424]">Output List</span>
        </button>
        <Divider className="mt-1.5 ml-1 h-[18px]" />
        <button aria-label="New sheet" className="mt-2.5 ml-[41px]">
          <Svg w={12} h={12}><path d="M6 .5v11M.5 6h11" /></Svg>
        </button>
      </div>
      <Svg w={4} h={12} className="mt-2.5 mr-3.5">
        <path d="M1 1h2v2H1zM1 5h2v2H1zM1 9h2v2H1z" fill="#3b3b3b" stroke="none" />
      </Svg>
      <div className="mt-1.5 mr-[17px] flex h-[18px] w-[38%] items-center justify-between rounded-lg bg-[#f5f5f5] px-1">
        <Svg w={7} h={10}><path d="M7 0v10L0 5z" fill="#707070" stroke="none" /></Svg>
        <div className="mx-1.5 flex flex-1"><div className="h-[9px] w-[41%] rounded-full bg-[#707070]" /></div>
        <Svg w={7} h={10}><path d="M0 0v10l7-5z" fill="#707070" stroke="none" /></Svg>
      </div>
    </div>
  );
}

function StatusBar() {
  const [zoom, setZoom] = useState(50);

  return (
    <footer className="flex h-[23px] items-center border-t border-b border-t-white border-b-[#808080] bg-[#f4f4f4] text-[11px] text-[#242424]">
      <span className="pl-[9px]">Ready</span>
      <button className="ml-5 flex items-center gap-1 font-semibold">
        <Svg w={15} h={15}>
          <circle cx="6.500" cy="2.500" r="1.800" />
          <path d="M1 4.500 5 6v3l-2.500 5M12 4.500 8.500 6v2M1 4.500C1 3 2 3 4.500 4h4c2.500-1 3.500-1 3.500.5M6.500 9 5 13M8.500 8.500l5.500 5.500M14 8.500 8.500 14" />
        </Svg>
        Accessibility: Investigate
      </button>
      <div className="ml-auto flex h-full items-center">
        <button className="flex items-center gap-[3px]">
          <Svg w={15} h={14}>
            <path d="M6 10H1V1h12v5M3 12.500h3" />
            <circle cx="10.500" cy="10" r="2.500" />
            <path d="M10.500 6v8M7 8l7 4M14 8l-7 4" strokeWidth=".8" />
          </Svg>
          Display Settings
        </button>
        <button aria-label="Normal view" className="ml-[18px] flex h-full w-10 items-center justify-center bg-[#dedede]">
          <Svg w={13} h={13}><path d="M.6.6h11.800v11.800H.6zM4.500.6v11.800M8.500.6v11.800M.6 4.500h11.800M.6 8.500h11.800" stroke="#242424" /></Svg>
        </button>
        <button aria-label="Page Layout view" className="flex w-10 justify-center">
          <Svg w={13} h={13}><path d="M.6.6h11.800v11.800H.6zM3 3h7v7H3zM4.500 5h4M4.500 6.500h4M4.500 8h4" stroke="#242424" /></Svg>
        </button>
        <button aria-label="Page Break Preview" className="flex w-10 justify-center">
          <Svg w={13} h={13}><path d="M.6.6h11.800v11.800H.6zM4.500.6v7M8.500.6v7M4.500 7.600H.6M8.500 7.600h-4" stroke="#242424" /></Svg>
        </button>
        <button aria-label="Zoom out" className="ml-1.5"><Svg w={9} h={9}><path d="M1 4.500h7" stroke="#242424" /></Svg></button>
        <input
          type="range"
          aria-label="Zoom"
          value={zoom}
          onChange={(e) => setZoom(Number(e.target.value))}
          className="mx-1 h-3 w-[101px] appearance-none bg-[linear-gradient(#707070,#707070)] bg-[length:100%_1px] bg-center bg-no-repeat [&::-webkit-slider-thumb]:h-3 [&::-webkit-slider-thumb]:w-1 [&::-webkit-slider-thumb]:appearance-none [&::-webkit-slider-thumb]:bg-[#5c5c5c]"
        />
        <button aria-label="Zoom in"><Svg w={9} h={9}><path d="M1 4.500h7M4.500 1v7" stroke="#242424" /></Svg></button>
        <span className="w-[53px] pr-3 text-right">100%</span>
      </div>
    </footer>
  );
}

export default function App() {
  return (
    <div className="flex h-screen flex-col overflow-hidden bg-[#efefef] font-['Open_Sans',sans-serif] text-[#242424]">
      <TitleBar />
      <TabBar />
      <Ribbon />
      <FormulaBar />
      <main className="flex min-h-0 flex-1">
        <Sheet />
        <div className="flex w-4 flex-col items-end border-l border-[#d6d6d6] bg-[#f2f2f2] pt-1.5 pb-0.5">
          <Svg w={10} h={7}><path d="M0 7h10L5 0z" fill="#707070" stroke="none" /></Svg>
          <div className="my-[5px] w-[9px] flex-1 rounded-full bg-[#707070]" />
          <Svg w={10} h={7} className="mt-2"><path d="M0 0h10L5 7z" fill="#707070" stroke="none" /></Svg>
        </div>
      </main>
      <SheetTabs />
      <StatusBar />
    </div>
  );
}
